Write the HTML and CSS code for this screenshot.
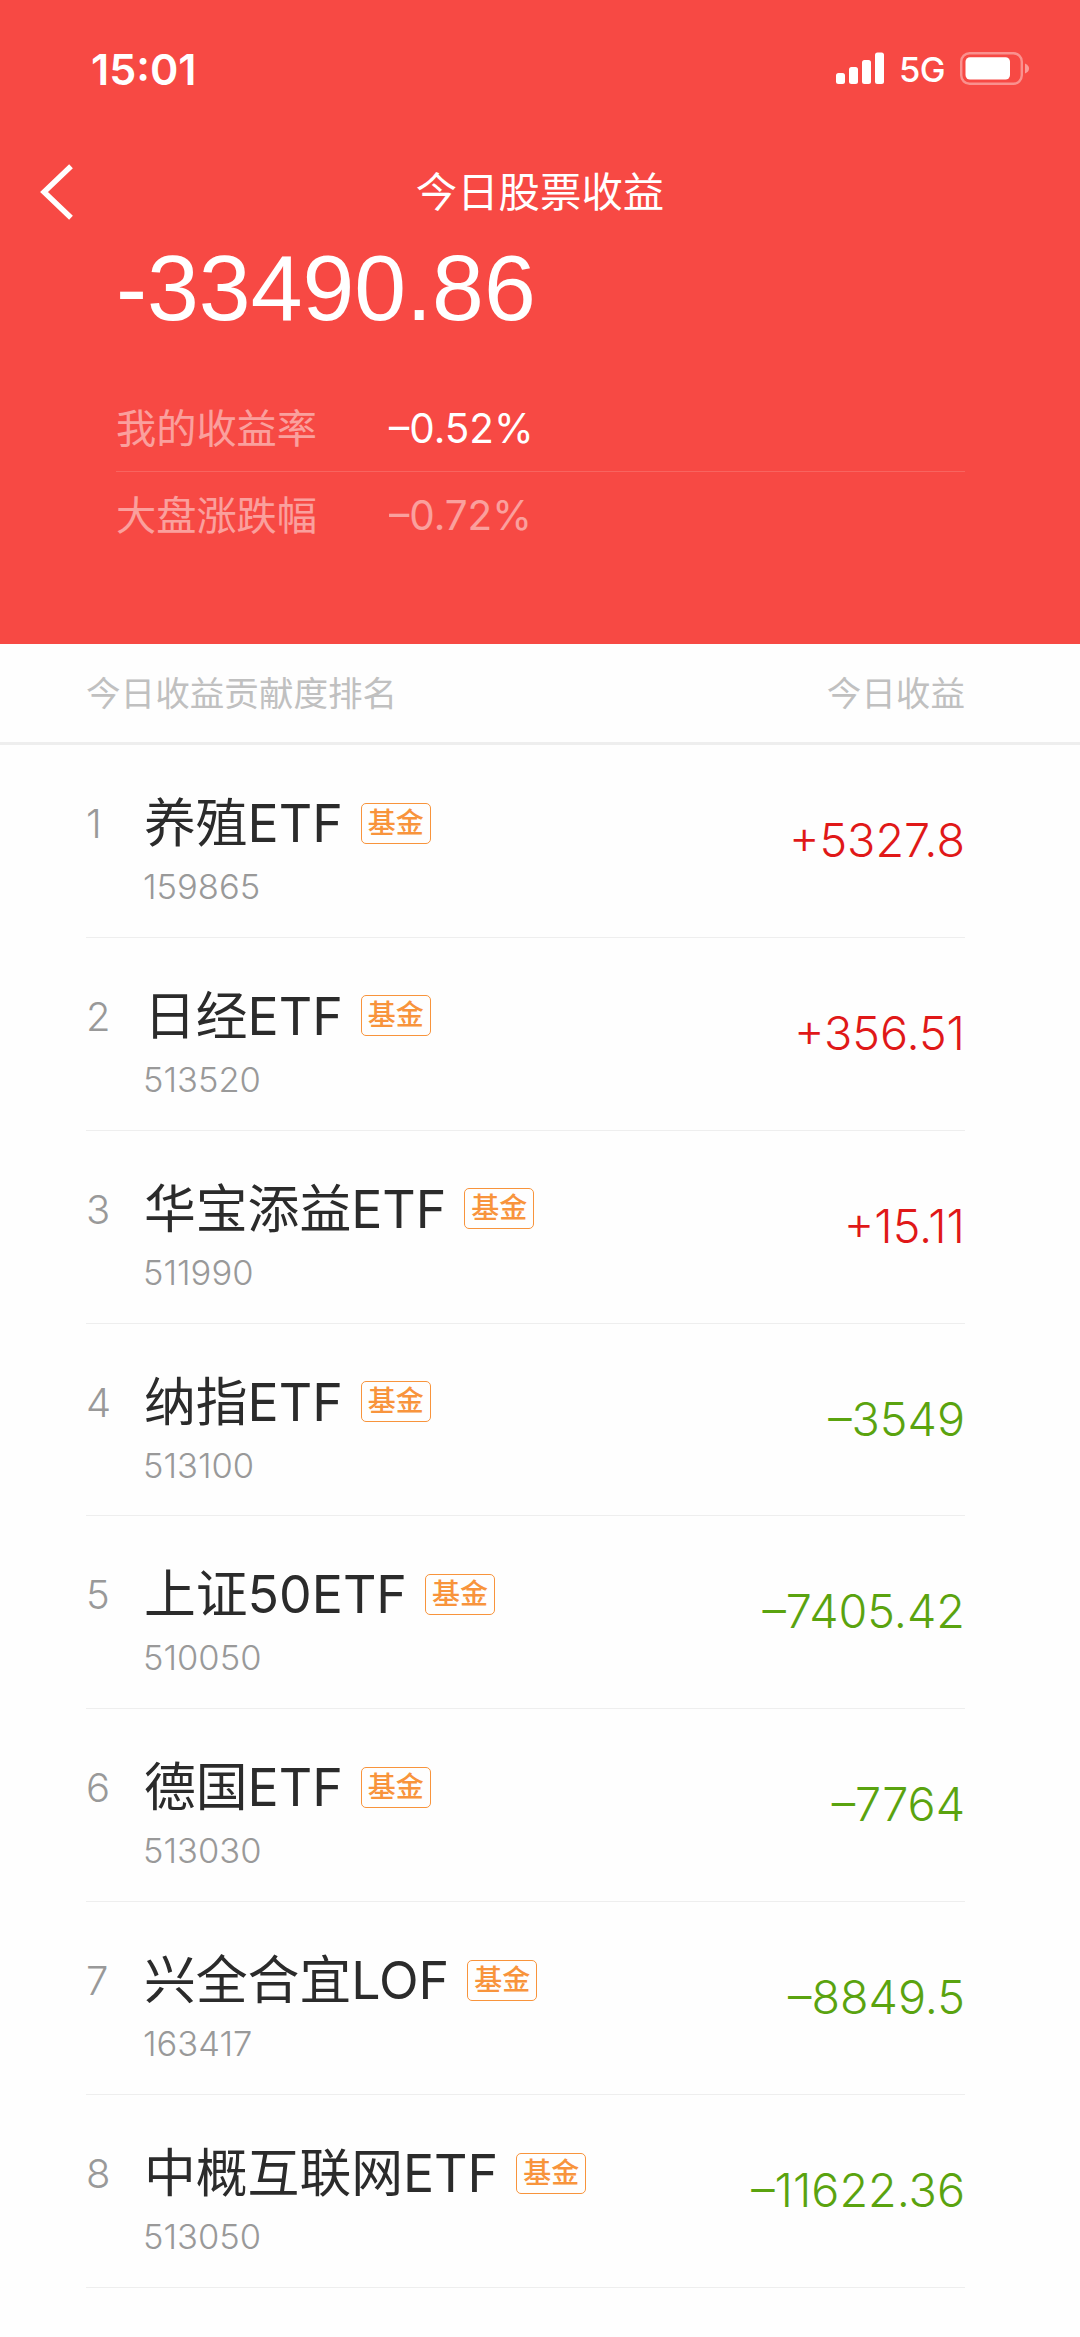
FILE: index.html
```html
<!DOCTYPE html>
<html lang="zh-CN">
<head>
    <meta charset="UTF-8">
    <meta name="viewport" content="width=device-width, initial-scale=1.0">
    <title>今日股票收益</title>
    <link rel="stylesheet" href="styles.css">
</head>

<body>
    <!-- Red summary area -->
    <header class="summary">
        <div class="status-bar">
            <span class="time">15:01</span>
            <div class="status-icons">
                <svg class="signal" width="49" height="33" viewBox="0 0 49 33" fill="#fff">
                    <rect x="0" y="21" width="9" height="11" rx="2.5" />
                    <rect x="13" y="15" width="9" height="17" rx="2.5" />
                    <rect x="26" y="8" width="9" height="24" rx="2.5" />
                    <rect x="39" y="0.5" width="9" height="31.5" rx="2.5" />
                </svg>
                <span class="network">5G</span>
                <svg class="battery" width="70" height="33" viewBox="0 0 70 33">
                    <rect x="1.2" y="1.2" width="60.6" height="30.6" rx="8.5" fill="none" stroke="#fff" stroke-opacity="0.4" stroke-width="2.4" />
                    <rect x="5.5" y="5.2" width="44.5" height="22.4" rx="4.5" fill="#fff" />
                    <path d="M65 11.5 C70.4 13.5 70.4 19.5 65 21.5 Z" fill="#fff" fill-opacity="0.45" />
                </svg>
            </div>
        </div>

        <div class="nav-bar">
            <svg class="back" width="34" height="56" viewBox="0 0 34 56" fill="none" stroke="#fff" stroke-width="5.4">
                <path d="M31 2.2 L4 28 L31 53.8" />
            </svg>
            <h1 class="title">今日股票收益</h1>
        </div>

        <div class="total">-33490.86</div>

        <div class="rates">
            <div class="rate">
                <span class="rate-label">我的收益率</span>
                <span class="rate-value">–0.52%</span>
            </div>
            <div class="rate market">
                <span class="rate-label">大盘涨跌幅</span>
                <span class="rate-value">–0.72%</span>
            </div>
        </div>
    </header>

    <div class="list-header">
        <span>今日收益贡献度排名</span>
        <span>今日收益</span>
    </div>

    <!-- Ranking list -->
    <ul class="list">
        <li class="item">
            <span class="rank">1</span>
            <div class="fund">
                <div class="name"><span>养殖ETF</span><span class="tag">基金</span></div>
                <div class="code">159865</div>
            </div>
            <span class="amount up">+5327.8</span>
        </li>
        <li class="item">
            <span class="rank">2</span>
            <div class="fund">
                <div class="name"><span>日经ETF</span><span class="tag">基金</span></div>
                <div class="code">513520</div>
            </div>
            <span class="amount up">+356.51</span>
        </li>
        <li class="item">
            <span class="rank">3</span>
            <div class="fund">
                <div class="name"><span>华宝添益ETF</span><span class="tag">基金</span></div>
                <div class="code">511990</div>
            </div>
            <span class="amount up">+15.11</span>
        </li>
        <li class="item">
            <span class="rank">4</span>
            <div class="fund">
                <div class="name"><span>纳指ETF</span><span class="tag">基金</span></div>
                <div class="code">513100</div>
            </div>
            <span class="amount down">–3549</span>
        </li>
        <li class="item">
            <span class="rank">5</span>
            <div class="fund">
                <div class="name"><span>上证50ETF</span><span class="tag">基金</span></div>
                <div class="code">510050</div>
            </div>
            <span class="amount down">–7405.42</span>
        </li>
        <li class="item">
            <span class="rank">6</span>
            <div class="fund">
                <div class="name"><span>德国ETF</span><span class="tag">基金</span></div>
                <div class="code">513030</div>
            </div>
            <span class="amount down">–7764</span>
        </li>
        <li class="item">
            <span class="rank">7</span>
            <div class="fund">
                <div class="name"><span>兴全合宜LOF</span><span class="tag">基金</span></div>
                <div class="code">163417</div>
            </div>
            <span class="amount down">–8849.5</span>
        </li>
        <li class="item">
            <span class="rank">8</span>
            <div class="fund">
                <div class="name"><span>中概互联网ETF</span><span class="tag">基金</span></div>
                <div class="code">513050</div>
            </div>
            <span class="amount down">–11622.36</span>
        </li>
    </ul>
</body>
</html>
```
FILE: styles.css
```css
/* styles.css */
* {
    box-sizing: border-box;
}

body {
    margin: 0;
    font-family: Inter, "Noto Sans CJK SC", sans-serif;
    font-weight: 400;
    background-color: #fefefe;
}

/* Summary */
.summary {
    height: 644px;
    background-color: #f74944;
    color: #fff;
}

.status-bar {
    display: flex;
    justify-content: space-between;
    align-items: center;
    height: 137px;
    padding: 0 50px 0 91px;
}

.time {
    font-size: 43px;
    font-weight: 600;
}

.status-icons {
    display: flex;
    align-items: center;
}

.network {
    margin: 2px 15px 0 14px;
    font-size: 34.5px;
    font-weight: 500;
    letter-spacing: -0.6px;
}

.nav-bar {
    display: grid;
    grid-template-columns: 120px 1fr 120px;
    align-items: center;
    height: 110px;
}

.back {
    margin-left: 40px;
}

.title {
    margin: 0;
    font-size: 41.4px;
    font-weight: 400;
    line-height: 60px;
    text-align: center;
}

.total {
    padding-left: 116px;
    font-family: "Liberation Sans", Arial, sans-serif;
    font-size: 93.2px;
    line-height: 82px;
}

.rates {
    margin: 58px 115px 0 116px;
}

.rate {
    display: flex;
    align-items: center;
    height: 89px;
    font-size: 40.4px;
    line-height: 60px;
}

.rate:first-child {
    height: 84px;
}

.rate-label {
    width: 273px;
    font-size: 40.2px;
    opacity: 0.48;
}

.market {
    border-top: 1px solid rgba(255, 255, 255, 0.15);
}

.market .rate-value {
    opacity: 0.48;
}

/* List */
.list-header {
    display: flex;
    justify-content: space-between;
    align-items: center;
    height: 101px;
    padding: 0 115px 4px 86px;
    border-bottom: 3px solid #eee;
    color: #c0c0c0;
    font-size: 34.6px;
}

.list {
    margin: 0 115px 0 86px;
    padding: 0;
    list-style-type: none;
}

.item {
    display: flex;
    height: 192.86px;
    border-bottom: 1px solid #eee;
}

.rank {
    width: 57px;
    margin-top: 49px;
    color: #999;
    font-size: 40px;
    font-weight: 300;
    line-height: 60px;
}

.fund {
    flex: 1;
    padding-top: 42px;
}

.name {
    display: flex;
    align-items: center;
    height: 72px;
    padding-left: 1px;
    color: #2b2b2b;
    font-size: 51.8px;
    line-height: 70px;
}

.tag {
    height: 41px;
    margin-left: 18px;
    padding: 0 6px;
    border: 1px solid #f8943c;
    border-radius: 5px;
    color: #f8943c;
    font-size: 28px;
    font-weight: 500;
    line-height: 39px;
}

.code {
    color: #999;
    font-size: 34.5px;
    font-weight: 300;
    line-height: 55px;
}

.amount {
    margin-top: 65px;
    font-size: 46.7px;
    font-weight: 300;
    line-height: 60px;
}

.up {
    color: #e01818;
}

.down {
    color: #5aa30f;
}
```
